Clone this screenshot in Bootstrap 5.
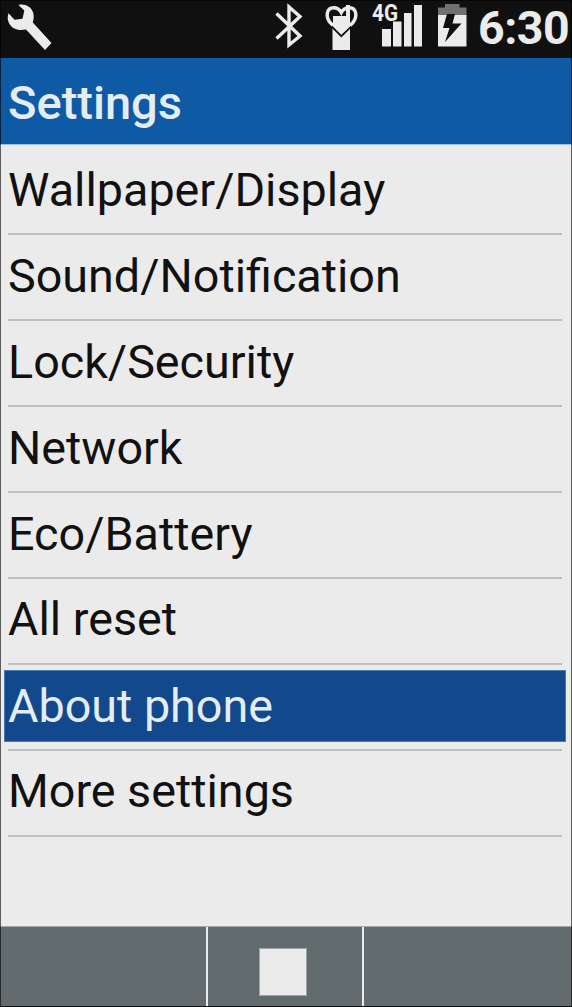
<!DOCTYPE html>
<html lang="en">
<head>
<meta charset="utf-8">
<meta name="viewport" content="width=device-width, initial-scale=1">
<title>Settings</title>
<link rel="stylesheet" href="https://cdn.jsdelivr.net/npm/bootstrap@5.3.0/dist/css/bootstrap.min.css">
<style>
body { font-family: Roboto, "Liberation Sans", sans-serif; background: #ebebeb; color: #111; }
.phone { width: 572px; height: 1007px; }
/* thin dark frame over the whole screen */
.phone::after { content: ""; position: absolute; inset: 0; border: 1px solid rgba(0,0,0,.6); pointer-events: none; }
.statusbar { height: 58px; background: #101010; padding: 0 1px 0 7px; }
.statusbar svg { display: block; flex: none; fill: #ebebeb; }
.gap-bt { margin-right: 20px; }
.gap-battery { margin-left: 12px; }
.clock { color: #ebebeb; font-size: 46.5px; font-weight: 700; line-height: 57px; width: 93px; margin-left: 10px; white-space: nowrap; letter-spacing: -.5px; }
.titlebar { height: 87px; background: #0f5aa5; color: #e6ecf3; padding: 5px 8px 0; font-size: 47px; font-weight: 500; border-bottom: 1px solid #9cbfe2; }
.settings { padding: 4.6px 10px 0 8px; }
.settings .list-group-item { height: 85.9px; padding: 5.4px 0 0; border: 0; border-bottom: 2px solid #bdc0bf; border-radius: 0; background: none; color: inherit; font-size: 46.7px; line-height: 71px; white-space: nowrap; }
.settings .list-group-item span { display: block; height: 72px; }
.settings .list-group-item.active { color: #e6ecf3; margin: 0; }
.settings .active span { background: #11498c; margin: 0 -4px; border: 1px solid #4c7aaf; line-height: 70px; padding-left: 3px; }
.softkeys { height: 81px; background: #626b6e; border-top: 1px solid #a5a9aa; border-bottom: 1px solid #22292c; }
.key-side { width: 206px; }
.key-mid { width: 158px; border-left: 2px solid #ebebeb; border-right: 2px solid #ebebeb; padding: 21px 0 0 51px; }
.stop { width: 48px; height: 48px; background: #ebebeb; border: 1px solid #a1a6a7; }
</style>
</head>
<body>
<main class="phone position-relative d-flex flex-column overflow-hidden">
  <header class="statusbar d-flex">
    <svg class="me-auto" width="46" height="58" viewBox="7 0 46 58"><path d="M18.500 5C25 3.500 31 6.500 33.300 13C34 16.500 33.800 19 32.800 22.500L51.500 43L45 50L26 29.500C18 31 12.200 29 9.200 23.500C7.500 20 7.200 17 8.500 13.300L14.500 19.800L22.500 18.800L24.300 10.500Z"/></svg>
    <svg class="gap-bt" width="30" height="58" viewBox="274 0 30 58"><path d="M276.500 13.500L300 36L289 45V7L300 16.500L276.500 38.500" style="fill:none;stroke:#ebebeb;stroke-width:3.400"/></svg>
    <svg width="36" height="58" viewBox="324 0 36 58"><path d="M332.500 25H350V50H332.500Z"/><path d="M341.300 34L330 22.500C325 16 327 7.800 333.500 7.800C337.500 7.800 340 10 341.300 12.500C342.600 10 345.500 7.800 349.500 7.800C356 7.800 358 16 353 22.500Z" style="fill:#101010;stroke:#ebebeb;stroke-width:3.400"/><path d="M332 26.500L341.300 36L351 26.500" style="fill:none;stroke:#101010;stroke-width:2.200"/><path d="M333 16H346V5H350V26.500L341.300 34.800L333 26.500Z"/></svg>
    <svg class="ms-2" width="56" height="58" viewBox="368 0 56 58"><text x="372" y="20.500" textLength="26" lengthAdjust="spacingAndGlyphs" font-family="Roboto" font-size="23" font-weight="700">4G</text><path d="M382 29H391V46.500H382ZM393 21.500H401.500V46.500H393ZM404 13H411.500V46.500H404ZM414 5H422V46.500H414Z"/></svg>
    <svg class="gap-battery" width="32" height="58" viewBox="436 0 32 58"><path d="M438 7.500H445V4H459.500V7.500H466.500V15H438Z" style="fill:#707070"/><path d="M438 15H466.500V46.500H438Z"/><path d="M447 14H455L452.500 23.500H461.500L445 42L449.500 28H443Z" style="fill:#101010"/></svg>
    <div class="clock">6:30</div>
  </header>
  <h1 class="titlebar d-flex align-items-center m-0">Settings</h1>
  <div class="settings list-group flex-grow-1">
    <div class="list-group-item"><span>Wallpaper/Display</span></div>
    <div class="list-group-item"><span>Sound/Notification</span></div>
    <div class="list-group-item"><span>Lock/Security</span></div>
    <div class="list-group-item"><span>Network</span></div>
    <div class="list-group-item"><span>Eco/Battery</span></div>
    <div class="list-group-item"><span>All reset</span></div>
    <div class="list-group-item active"><span>About phone</span></div>
    <div class="list-group-item"><span>More settings</span></div>
  </div>
  <footer class="softkeys d-flex">
    <div class="key-side"></div>
    <div class="key-mid"><div class="stop"></div></div>
    <div class="flex-grow-1"></div>
  </footer>
</main>
<script src="https://cdn.jsdelivr.net/npm/bootstrap@5.3.0/dist/js/bootstrap.bundle.min.js"></script>
</body>
</html>
